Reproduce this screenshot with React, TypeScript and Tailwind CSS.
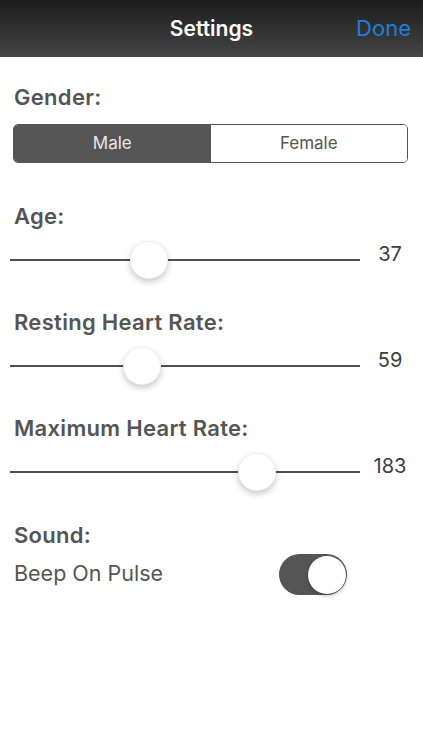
import { useState } from "react";

const font = { fontFamily: "Inter, 'Liberation Sans', Arial, sans-serif" };

function SliderRow({ value, ratio }: { value: number; ratio: number }) {
  return (
    <div className="flex items-center h-[38px]">
      <div className="relative ml-[10px] w-[350px] h-[38px] flex items-center">
        <div className="w-full h-[2px] bg-[#4f4f4f]" />
        <div
          className="absolute top-0 w-[38px] h-[38px] rounded-full bg-white border border-black/5 shadow-[0_3px_6px_rgba(0,0,0,0.22)]"
          style={{ left: `calc(${ratio * 100}% - ${ratio * 38}px)` }}
        />
      </div>
      <div className="w-[60px] text-center text-[20px] leading-6 text-[#3d3d3d] -mt-[12px]">{value}</div>
    </div>
  );
}

export default function App() {
  const [gender, setGender] = useState("male");
  const [beep, setBeep] = useState(true);

  const sliders = [
    { id: "age", label: "Age:", value: 37, ratio: 0.385 },
    { id: "rest", label: "Resting Heart Rate:", value: 59, ratio: 0.362 },
    { id: "max", label: "Maximum Heart Rate:", value: 183, ratio: 0.731 },
  ];

  return (
    <div className="min-h-[750px] bg-white" style={font}>
      {/* Nav bar */}
      <div className="relative h-[57px] bg-gradient-to-b from-[#1c1c1c] to-[#464646] flex items-center justify-center">
        <span className="text-white text-[21px] font-semibold">Settings</span>
        <span className="absolute right-[12px] text-[22px] text-[#1d7fdc]">Done</span>
      </div>

      <div className="pt-[28px] text-[#555555]">
        {/* Gender */}
        <div className="px-[14px] text-[22px] leading-6 font-semibold tracking-[0.3px]">Gender:</div>
        <div className="mt-[15px] mx-[13px] w-[395px] h-[39px] flex border border-[#555555] rounded-[5px] overflow-hidden text-[17px]">
          <button
            className={`flex-1 ${gender === "male" ? "bg-[#555555] text-[#e8e8e8]" : "bg-white text-[#555555]"}`}
            onClick={() => setGender("male")}
          >
            Male
          </button>
          <button
            className={`flex-1 ${gender === "female" ? "bg-[#555555] text-[#e8e8e8]" : "bg-white text-[#555555]"}`}
            onClick={() => setGender("female")}
          >
            Female
          </button>
        </div>

        {/* Sliders */}
        <div className="mt-[41px] flex flex-col gap-[31px]">
          {sliders.map((s) => (
            <div key={s.id} className="flex flex-col gap-[13px]">
              <div className="px-[14px] text-[22px] leading-6 font-semibold tracking-[0.3px]">{s.label}</div>
              <SliderRow value={s.value} ratio={s.ratio} />
            </div>
          ))}
        </div>

        {/* Sound */}
        <div className="mt-[32px] px-[14px] text-[22px] leading-6 font-semibold tracking-[0.3px]">Sound:</div>
        <div className="mt-[7px] flex items-center h-[41px] pl-[14px]">
          <span className="w-[265px] text-[21.5px] leading-6 -mt-[4px]">Beep On Pulse</span>
          <button
            className={`relative w-[68px] h-[41px] rounded-full ${beep ? "bg-[#555555]" : "bg-[#e5e5e5]"}`}
            onClick={() => setBeep(!beep)}
          >
            <span
              className={`absolute top-[1.5px] w-[38px] h-[38px] rounded-full bg-white shadow-[0_2px_4px_rgba(0,0,0,0.25)] ${beep ? "right-[1.5px]" : "left-[1.5px]"}`}
            />
          </button>
        </div>
      </div>
    </div>
  );
}
